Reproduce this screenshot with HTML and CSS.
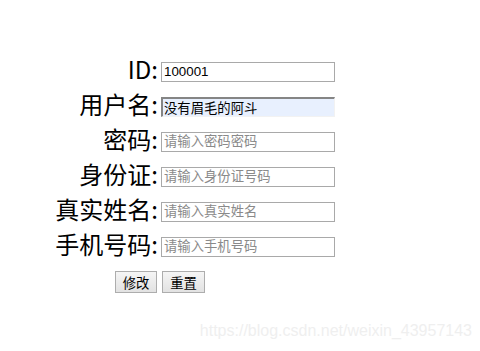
FILE: index.html
```html
<!DOCTYPE html>
<html>
<head>
<meta charset="utf-8">
<link rel="stylesheet" href="styles.css">
</head>
<body>
<form class="form">
  <div class="row"><label class="lbl">ID:</label><input class="inp" type="text" value="100001"></div>
  <div class="row"><label class="lbl">用户名:</label><input class="inp auto" type="text" value="没有眉毛的阿斗"></div>
  <div class="row"><label class="lbl">密码:</label><input class="inp" type="text" placeholder="请输入密码密码"></div>
  <div class="row"><label class="lbl">身份证:</label><input class="inp" type="text" placeholder="请输入身份证号码"></div>
  <div class="row"><label class="lbl">真实姓名:</label><input class="inp" type="text" placeholder="请输入真实姓名"></div>
  <div class="row"><label class="lbl">手机号码:</label><input class="inp" type="text" placeholder="请输入手机号码"></div>
  <div class="btns"><button type="button" class="btn">修改</button><button type="button" class="btn b2">重置</button></div>
</form>
<div class="wm">https://blog.csdn.net/weixin_43957143</div>
</body>
</html>
```
FILE: styles.css
```css
html, body {
  margin: 0;
  padding: 0;
  background: #fff;
}
body {
  width: 480px;
  height: 351px;
  position: relative;
  overflow: hidden;
  font-family: "Noto Sans CJK SC", "Liberation Sans", sans-serif;
}
.form {
  padding-top: 54px;
  margin: 0;
}
.row {
  display: flex;
  align-items: center;
  height: 35px;
}
.lbl {
  width: 158px;
  padding-right: 3px;
  text-align: right;
  font-size: 24px;
  line-height: 35px;
  color: #000;
  position: relative;
  top: -3px;
}
.inp {
  box-sizing: border-box;
  width: 174px;
  height: 20px;
  margin: 0;
  padding: 0 2px;
  border: 1px solid #a9a9a9;
  font-family: "Liberation Sans", "Noto Sans CJK SC", sans-serif;
  font-size: 13.33px;
  color: #000;
  background: #fff;
  outline: none;
}
.inp::placeholder {
  color: #8a8a8a;
  font-family: "Noto Sans CJK SC", sans-serif;
}
.auto {
  background: #e8f0fe;
  border-top: 2px solid #858585;
  border-left: 2px solid #858585;
  border-right: 1px solid #f2f2f2;
  border-bottom: 1px solid #f2f2f2;
  padding-left: 1px;
  font-family: "Noto Sans CJK SC", sans-serif;
}
.btns {
  display: flex;
  gap: 5px;
  padding-left: 115px;
  margin-top: 7px;
}
.btn {
  box-sizing: border-box;
  width: 42px;
  height: 22px;
  margin: 0;
  padding: 0;
  border: 1px solid #adadad;
  border-radius: 0;
  background: linear-gradient(#f5f5f5, #e2e2e2);
  font-family: "Noto Sans CJK SC", sans-serif;
  font-size: 13.33px;
  color: #000;
}
.b2 {
  width: 43px;
}
.wm {
  position: absolute;
  right: 8px;
  top: 322px;
  font-family: "Liberation Sans", sans-serif;
  font-size: 16px;
  color: #efefef;
  white-space: nowrap;
}
```
